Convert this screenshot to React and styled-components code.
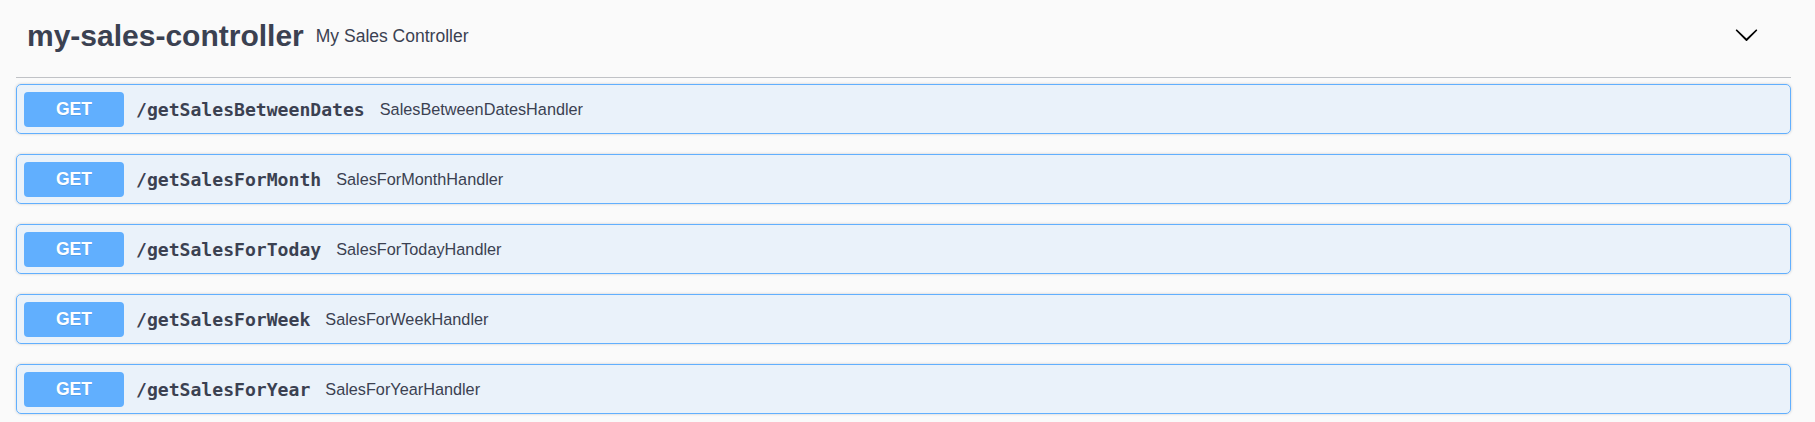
import React from "react";
import styled, { createGlobalStyle } from "styled-components";

const GlobalStyle = createGlobalStyle`
  html, body {
    margin: 0;
    padding: 0;
    background: #fafafa;
  }
  body {
    font-family: "Liberation Sans", Arial, sans-serif;
    color: #3b4151;
  }
`;

const Section = styled.section`
  padding: 0 24px 0 16px;
`;

const TagHeader = styled.div`
  display: flex;
  align-items: center;
  height: 72px;
  padding: 0 32px 5px 11px;
  border-bottom: 1px solid rgba(59, 65, 81, 0.3);
  margin-bottom: 6px;
`;

const TagName = styled.h3`
  margin: 0;
  font-size: 30px;
  line-height: 1;
  font-weight: 700;
  color: #3b4151;
`;

const TagDescription = styled.span`
  margin-left: 12px;
  font-size: 17.5px;
  color: #3b4151;
`;

const ExpandButton = styled.button`
  margin-left: auto;
  margin-bottom: 4px;
  padding: 0;
  border: none;
  background: none;
  display: flex;
  cursor: pointer;
`;

const OpBlock = styled.div`
  display: flex;
  align-items: center;
  height: 48px;
  padding: 0 7px;
  margin-bottom: 20px;
  border: 1px solid #61affe;
  border-radius: 5px;
  background: rgba(97, 175, 254, 0.1);
  box-shadow: 0 0 3px rgba(0, 0, 0, 0.19);
`;

const Method = styled.span`
  display: flex;
  align-items: center;
  justify-content: center;
  flex-shrink: 0;
  width: 100px;
  height: 35px;
  border-radius: 4px;
  background: #61affe;
  color: #fff;
  font-size: 17.5px;
  font-weight: 700;
  text-shadow: 0 1px 0 rgba(0, 0, 0, 0.1);
`;

const Path = styled.span`
  margin-left: 12px;
  font-family: "DejaVu Sans Mono", "Liberation Mono", monospace;
  font-size: 18.1px;
  font-weight: 700;
  color: #3b4151;
`;

const Summary = styled.span`
  margin-left: 15px;
  font-size: 16.25px;
  color: #3b4151;
`;

const operations = [
  { path: "/getSalesBetweenDates", summary: "SalesBetweenDatesHandler" },
  { path: "/getSalesForMonth", summary: "SalesForMonthHandler" },
  { path: "/getSalesForToday", summary: "SalesForTodayHandler" },
  { path: "/getSalesForWeek", summary: "SalesForWeekHandler" },
  { path: "/getSalesForYear", summary: "SalesForYearHandler" },
];

const Arrow = () => (
  <svg width="25" height="25" viewBox="0 0 20 20" fill="#000">
    <path d="M17.418 6.109c.272-.268.709-.268.979 0s.271.701 0 .969l-7.908 7.83c-.27.268-.707.268-.979 0l-7.908-7.83c-.27-.268-.27-.701 0-.969.271-.268.709-.268.979 0L10 13.25l7.418-7.141z" />
  </svg>
);

export default function App() {
  return (
    <>
      <GlobalStyle />
      <Section>
        <TagHeader>
          <TagName>my-sales-controller</TagName>
          <TagDescription>My Sales Controller</TagDescription>
          <ExpandButton aria-label="collapse">
            <Arrow />
          </ExpandButton>
        </TagHeader>
        {operations.map((op) => (
          <OpBlock key={op.path}>
            <Method>GET</Method>
            <Path>{op.path}</Path>
            <Summary>{op.summary}</Summary>
          </OpBlock>
        ))}
      </Section>
    </>
  );
}
